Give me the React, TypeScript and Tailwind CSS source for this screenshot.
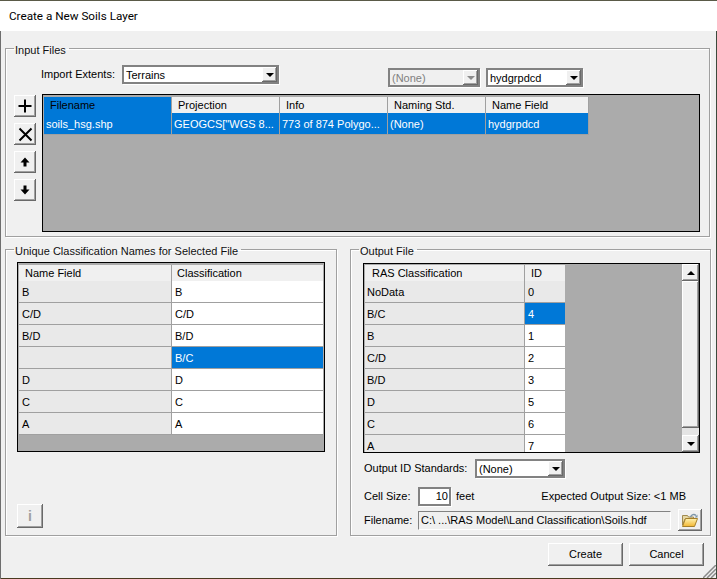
const raised = "shadow-[inset_-1px_-1px_0_#696969,inset_1px_1px_0_#ffffff,inset_-2px_-2px_0_#a0a0a0]";

const Arrow = ({ disabled }: { disabled?: boolean }) => (
  <svg width="8" height="4" viewBox="0 0 8 4">
    <path d="M0 0h8L4 4z" fill={disabled ? "#8c8c8c" : "#000000"} />
  </svg>
);

const Combo = ({ text, width, disabled }: { text: string; width: string; disabled?: boolean }) => (
  <div
    className={`${width} h-[19px] flex items-stretch border-2 border-[#828282] shadow-[1px_1px_0_#ffffff] ${disabled ? "bg-[#f0f0f0] text-[#808080]" : "bg-white"}`}
  >
    <span className="flex-1 pl-[2px] pt-[1px] leading-[15px] whitespace-nowrap overflow-hidden">{text}</span>
    <span className={`w-[15px] flex items-center justify-center bg-[#f0f0f0] ${raised}`}>
      <Arrow disabled={disabled} />
    </span>
  </div>
);

const ToolButton = ({ children }: { children: React.ReactNode }) => (
  <div className={`w-[22px] h-[22px] bg-[#f0f0f0] flex items-center justify-center ${raised}`}>{children}</div>
);

const Group = ({ title, className, children }: { title: string; className: string; children: React.ReactNode }) => (
  <fieldset className={`border border-[#a0a0a0] shadow-[1px_1px_0_#ffffff,inset_1px_1px_0_#ffffff] ${className}`}>
    <legend className="ml-[8px] pl-[1px] pr-[3px] pt-[4px] leading-[13px] text-[#101010]">{title}</legend>
    {children}
  </fieldset>
);

const cell = "flex items-center h-[22px] pt-[2px] border-b border-r border-[#a0a0a0] whitespace-nowrap overflow-hidden";
const head = "h-[16px] flex items-center border-r border-[#a0a0a0] whitespace-nowrap";

const inputCols = [
  { name: "Filename", w: "w-[128px]", value: "soils_hsg.shp" },
  { name: "Projection", w: "w-[108px]", value: "GEOGCS[\"WGS 8..." },
  { name: "Info", w: "w-[108px]", value: "773 of 874 Polygo..." },
  { name: "Naming Std.", w: "w-[98px]", value: "(None)" },
  { name: "Name Field", w: "w-[103px]", value: "hydgrpdcd" },
];

const classRows = [
  ["B", "B"],
  ["C/D", "C/D"],
  ["B/D", "B/D"],
  ["", "B/C"],
  ["D", "D"],
  ["C", "C"],
  ["A", "A"],
];

const rasRows = [
  ["NoData", "0"],
  ["B/C", "4"],
  ["B", "1"],
  ["C/D", "2"],
  ["B/D", "3"],
  ["D", "5"],
  ["C", "6"],
  ["A", "7"],
];

const InputFiles = () => (
  <Group title="Input Files" className="ml-[5px] w-[705px] h-[197px]">
    <div className="flex items-start h-[37px] pl-[35px] pt-[8px]">
      <span className="w-[81px] leading-[19px]">Import Extents:</span>
      <Combo text="Terrains" width="w-[157px]" />
      <div className="ml-[109px] mt-[3px] flex gap-[6px]">
        <Combo text="(None)" width="w-[92px]" disabled />
        <Combo text="hydgrpdcd" width="w-[97px]" />
      </div>
    </div>
    <div className="flex pl-[8px]">
      <div className="w-[28px] flex flex-col gap-[6px] pt-[1px]">
        <ToolButton>
          <svg width="14" height="14" viewBox="0 0 14 14">
            <path d="M6 0.5h2v5.5h5.5v2H8v5.5H6V8H0.5V6H6z" fill="#000000" />
          </svg>
        </ToolButton>
        <ToolButton>
          <svg width="15" height="15" viewBox="0 0 15 15">
            <path d="M1.5 1.5l12 12M13.5 1.5l-12 12" stroke="#000000" strokeWidth="2" fill="none" />
          </svg>
        </ToolButton>
        <ToolButton>
          <svg width="10" height="10" viewBox="0 0 10 10">
            <path d="M5 0.5L9.5 5.5H6.5V9.5H3.5V5.5H0.5z" fill="#000000" />
          </svg>
        </ToolButton>
        <ToolButton>
          <svg width="10" height="10" viewBox="0 0 10 10">
            <path d="M5 9.5L9.5 4.5H6.5V0.5H3.5V4.5H0.5z" fill="#000000" />
          </svg>
        </ToolButton>
      </div>
      <div className="w-[658px] h-[138px] border border-black bg-[#ababab] pt-[2px] pl-[1px]">
        <div className="flex">
          {inputCols.map((c, i) => (
            <div key={c.name} className={`${c.w} ${head} ${i === 0 ? "bg-[#0078d7] pl-[6px]" : "bg-[#f0f0f0] pl-[6px]"}`}>
              {c.name}
            </div>
          ))}
        </div>
        <div className="flex text-white">
          {inputCols.map((c) => (
            <div key={c.name} className={`${c.w} ${cell} bg-[#0078d7] pl-[2px]`}>
              {c.value}
            </div>
          ))}
        </div>
      </div>
    </div>
  </Group>
);

const ClassificationNames = () => (
  <Group title="Unique Classification Names for Selected File" className="w-[332px] h-[295px]">
    <div className="ml-[11px] mt-[4px] w-[308px] h-[190px] border border-black bg-[#ababab] pt-[2px] pl-[1px]">
      <div className="flex">
        <div className={`w-[153px] ${head} bg-[#f0f0f0] pl-[6px]`}>Name Field</div>
        <div className={`w-[151px] ${head} bg-[#f0f0f0] border-r-0 pl-[5px]`}>Classification</div>
      </div>
      {classRows.map(([name, value], i) => (
        <div key={i} className="flex">
          <div className={`w-[153px] ${cell} bg-[#e9e9e9] pl-[3px]`}>{name}</div>
          <div
            className={`w-[151px] ${cell} border-r-0 pl-[3px] ${value === "B/C" ? "bg-[#0078d7] text-white" : "bg-white"}`}
          >
            {value}
          </div>
        </div>
      ))}
    </div>
    <div
      className={`ml-[11px] mt-[52px] w-[26px] h-[24px] bg-[#f0f0f0] flex items-center justify-center text-[#a0a0a0] text-[14px] font-bold ${raised}`}
    >
      i
    </div>
  </Group>
);

const OutputFile = () => (
  <Group title="Output File" className="w-[361px] h-[295px]">
    <div className="ml-[12px] mt-[5px] w-[337px] h-[190px] border border-black bg-[#ababab] flex overflow-hidden">
      <div className="pt-[1px] pl-[1px] w-[318px]">
        <div className="flex">
          <div className={`w-[160px] ${head} bg-[#f0f0f0] pl-[7px]`}>RAS Classification</div>
          <div className={`w-[40px] ${head} bg-[#f0f0f0] border-r-0 pl-[6px]`}>ID</div>
        </div>
        {rasRows.map(([name, id], i) => (
          <div key={name} className="flex">
            <div className={`w-[160px] ${cell} bg-[#e9e9e9] pl-[2px]`}>{name}</div>
            <div
              className={`w-[40px] ${cell} border-r-0 pl-[3px] ${i === 0 ? "bg-[#e9e9e9]" : i === 1 ? "bg-[#0078d7] text-white" : "bg-white"}`}
            >
              {id}
            </div>
          </div>
        ))}
      </div>
      <div className="w-[17px] flex flex-col bg-[#f0f0f0]">
        <div className={`h-[17px] flex items-center justify-center bg-[#f0f0f0] ${raised}`}>
          <svg width="8" height="4" viewBox="0 0 8 4">
            <path d="M4 0l4 4H0z" fill="#000000" />
          </svg>
        </div>
        <div className={`flex-1 bg-[#f0f0f0] ${raised}`} />
        <div className="h-[7px] bg-[#e4e4e4]" />
        <div className={`h-[17px] flex items-center justify-center bg-[#f0f0f0] ${raised}`}>
          <Arrow />
        </div>
      </div>
    </div>
    <div className="flex items-center ml-[13px] mt-[6px] h-[19px]">
      <span className="w-[111px]">Output ID Standards:</span>
      <Combo text="(None)" width="w-[90px]" />
    </div>
    <div className="flex items-center ml-[13px] mt-[9px] h-[19px]">
      <span className="w-[54px]">Cell Size:</span>
      <div className="w-[33px] h-[19px] bg-white border-2 border-[#828282] shadow-[1px_1px_0_#ffffff] text-right pr-[1px] leading-[15px]">
        10
      </div>
      <span className="ml-[5px]">feet</span>
      <span className="ml-[67px]">Expected Output Size: &lt;1 MB</span>
    </div>
    <div className="flex items-center ml-[13px] mt-[3px] h-[22px]">
      <span className="w-[54px]">Filename:</span>
      <div className="w-[253px] h-[19px] bg-[#f0f0f0] border border-[#828282] border-r-white border-b-white pl-[2px] leading-[17px] whitespace-nowrap">
        C:\ ...\RAS Model\Land Classification\Soils.hdf
      </div>
      <div className={`ml-[7px] w-[24px] h-[22px] bg-[#f0f0f0] flex items-center justify-center ${raised}`}>
        <svg width="16" height="14" viewBox="0 0 16 14">
          <defs>
            <linearGradient id="folderFront" x1="0" y1="0" x2="0" y2="1">
              <stop offset="0" stopColor="#fff3b0" />
              <stop offset="1" stopColor="#f2b632" />
            </linearGradient>
          </defs>
          <path d="M0.5 2.5h5l1 1.5h5v2H3L0.5 12z" fill="#e6d7a3" stroke="#a08a50" />
          <path d="M3.5 5.5h12l-3 8H0.5z" fill="url(#folderFront)" stroke="#a6802a" />
          <path d="M8.5 4C9.5 1.5 12 0.5 14 2.5" stroke="#7d95a8" strokeWidth="1.4" fill="none" />
          <path d="M12.5 4.5h3v-3z" fill="#7d95a8" />
        </svg>
      </div>
    </div>
  </Group>
);

export default function App() {
  return (
    <div className="relative w-[717px] h-[579px] bg-[#f0f0f0] text-black text-[11px] font-['Liberation_Sans',Arial,sans-serif] overflow-hidden shadow-[inset_1px_0_0_#6e6e6e,inset_-1px_0_0_#3c4a3c,inset_0_-1px_0_#4a3a20]">
      <div className="h-[31px] bg-white pl-[9px] pt-[8px] text-[11.7px] leading-[16px] font-['Roboto',sans-serif] shadow-[inset_0_1px_0_#5a5a48]">
        Create a New Soils Layer
      </div>
      <div className="mt-[9px]">
        <InputFiles />
      </div>
      <div className="flex ml-[5px] gap-[13px] mt-[4px]">
        <ClassificationNames />
        <OutputFile />
      </div>
      <div className="flex justify-end gap-[6px] pr-[13px] mt-[7px]">
        <div className={`w-[75px] h-[23px] flex items-center justify-center ${raised}`}>Create</div>
        <div className={`w-[75px] h-[23px] flex items-center justify-center ${raised}`}>Cancel</div>
      </div>
      <svg className="absolute right-[1px] bottom-[1px]" width="13" height="13" viewBox="0 0 13 13">
        <path d="M13 0L0 13M13 4L4 13M13 8L8 13" stroke="#8a8a8a" strokeWidth="1.5" fill="none" />
      </svg>
    </div>
  );
}
